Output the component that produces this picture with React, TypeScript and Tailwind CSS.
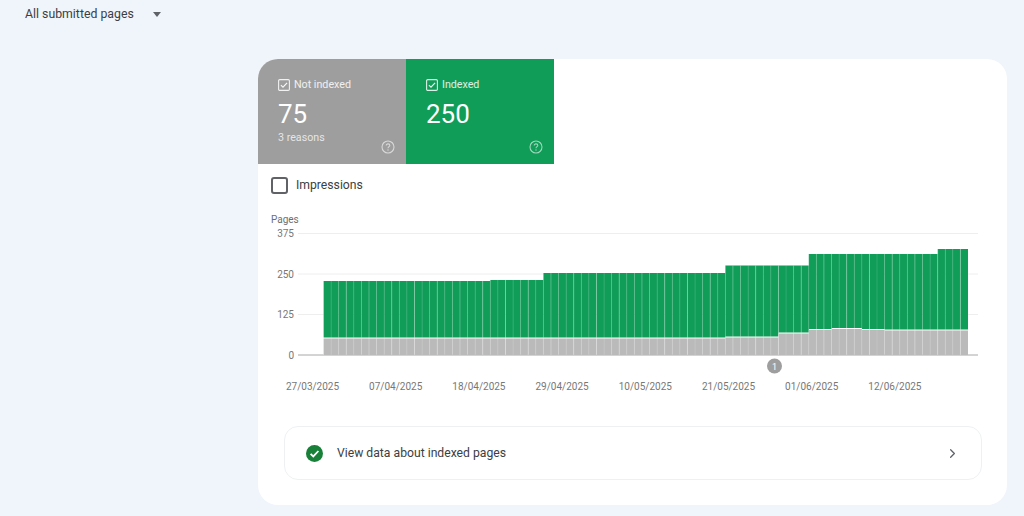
import React from "react";
import { ChevronRight } from "lucide-react";

// [bar count, top of bar in chart px]
const topRuns = [[22, 281], [7, 280], [24, 273], [11, 265.5], [17, 254], [4, 249]];
const grayRuns = [[53, 338], [7, 337], [4, 333], [3, 329.5], [4, 328.5], [3, 329.5], [11, 330]];

const expand = (runs: number[][]) => runs.flatMap(([n, v]) => Array<number>(n).fill(v));
const tops = expand(topRuns);
const grays = expand(grayRuns);

const barW = 644.5 / 85;

const yTicks = [
    { label: "375", y: 233.5 },
    { label: "250", y: 274 },
    { label: "125", y: 314.5 },
    { label: "0", y: 355 },
];

const dates = ["27/03/2025", "07/04/2025", "18/04/2025", "29/04/2025", "10/05/2025", "21/05/2025", "01/06/2025", "12/06/2025"];

function CheckBox() {
    return (
        <svg width="12" height="12" viewBox="0 0 12 12" fill="none" className="shrink-0">
            <rect x="0.6" y="0.6" width="10.8" height="10.8" rx="1.2" stroke="white" strokeOpacity="0.85" strokeWidth="1.1" />
            <path d="M2.9 6.1 5 8.2 9.1 3.9" stroke="white" strokeOpacity="0.9" strokeWidth="1.2" />
        </svg>
    );
}

function HelpIcon() {
    return (
        <svg width="14" height="14" viewBox="0 0 14 14" fill="none" className="absolute right-[11px] bottom-[10px]">
            <circle cx="7" cy="7" r="6" stroke="white" strokeOpacity="0.6" strokeWidth="1.1" />
            <path d="M5.2 5.6C5.2 4.5 6 3.9 7 3.9s1.8.6 1.8 1.5C8.8 6.7 7 6.7 7 8.3" stroke="white" strokeOpacity="0.6" strokeWidth="1.1" />
            <circle cx="7" cy="10" r="0.7" fill="white" fillOpacity="0.6" />
        </svg>
    );
}

function Tile({ label, value, sub, color }: { label: string; value: string; sub?: string; color: string }) {
    return (
        <div className={`relative w-[148px] h-full pl-5 pt-[19px] text-white ${color}`}>
            <div className="flex items-center gap-[4px] text-[10.7px] leading-[14px] text-white/85">
                <CheckBox />
                <span>{label}</span>
            </div>
            <div className="mt-[7px] text-[26px] leading-[30px] font-normal">{value}</div>
            {sub && <div className="mt-[2px] text-[10.7px] leading-[14px] text-white/75">{sub}</div>}
            <HelpIcon />
        </div>
    );
}

function Chart() {
    return (
        <svg width="749" height="192" viewBox="258 205 749 192" className="block" style={{ fontFamily: "Roboto, sans-serif" }}>
            <text x="271" y="222.5" fontSize="10" fill="#6b6f73">Pages</text>
            {yTicks.map((t) => (
                <g key={t.label}>
                    <text x="294" y={t.y + 3.5} fontSize="10" fill="#777" textAnchor="end">{t.label}</text>
                    {t.label !== "0" && <line x1="298" x2="978" y1={t.y} y2={t.y} stroke="#eeeeee" />}
                </g>
            ))}
            <line x1="298" x2="978" y1="355" y2="355" stroke="#a8a8a8" />
            {tops.map((top, i) => {
                const x = 323.5 + i * barW;
                return (
                    <g key={i}>
                        <rect x={x} y={top} width={barW} height={grays[i] - top - 0.5} fill="#0f9d58" />
                        <rect x={x} y={grays[i] + 0.5} width={barW} height={355 - grays[i] - 0.5} fill="#bababa" />
                        <line x1={x} x2={x} y1={top} y2={355} stroke="#ffffff" strokeOpacity={i % 3 === 0 ? 0.4 : 0.18} strokeWidth="0.7" />
                    </g>
                );
            })}
            <circle cx="774.5" cy="366" r="7.5" fill="#9e9e9e" />
            <text x="774.5" y="369.5" fontSize="9" fill="#fff" textAnchor="middle">1</text>
            {dates.map((d, i) => (
                <text key={d} x={312.5 + i * 83.2} y={390} fontSize="10" fill="#777" textAnchor="middle">{d}</text>
            ))}
        </svg>
    );
}

export default function App() {
    return (
        <div className="w-[1024px] h-[516px] overflow-hidden bg-[#f0f4fb] font-['Roboto',sans-serif] text-[#3c4043]">
            <div className="flex items-center h-[28px] pl-[25px]">
                <span className="text-[12.3px] text-[#3c4043] w-[128px]">All submitted pages</span>
                <span className="w-0 h-0 border-x-[4.5px] border-x-transparent border-t-[5px] border-t-[#5f6368]" />
            </div>

            <div className="ml-[258px] mt-[31px] w-[749px] h-[446px] rounded-[20px] bg-white overflow-hidden">
                <div className="flex h-[105px]">
                    <Tile label="Not indexed" value="75" sub="3 reasons" color="bg-[#9e9e9e]" />
                    <Tile label="Indexed" value="250" color="bg-[#0f9d58]" />
                </div>

                <div className="flex items-center h-[41px] pl-[13px] pt-[2px] gap-[8px]">
                    <span className="w-[17px] h-[17px] rounded-[3px] border-2 border-[#5f6368]" />
                    <span className="text-[12.2px] text-[#3c4043]">Impressions</span>
                </div>

                <Chart />

                <div className="flex items-center h-[54px] mx-[26px] mt-[29px] w-[698px] rounded-[14px] border border-[#eef0f2] pl-[21px] pr-[21px]">
                    <svg width="17" height="17" viewBox="0 0 17 17" className="shrink-0">
                        <circle cx="8.5" cy="8.5" r="8.5" fill="#188038" />
                        <path d="M4.6 8.8 7.3 11.4 12.4 6" fill="none" stroke="#fff" strokeWidth="1.8" />
                    </svg>
                    <span className="ml-[14px] text-[12.2px] text-[#3c4043]">View data about indexed pages</span>
                    <ChevronRight className="ml-auto text-[#5f6368]" size={15} strokeWidth={2} />
                </div>
            </div>
        </div>
    );
}
